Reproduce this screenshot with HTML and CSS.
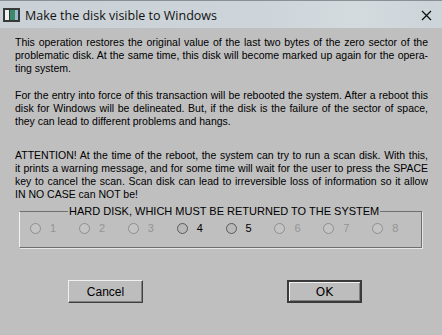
FILE: index.html
```html
<!DOCTYPE html>
<html>
<head>
<meta charset="utf-8">
<link rel="stylesheet" href="styles.css">
</head>
<body>
<div class="window">
  <div class="titlebar">
    <svg class="appicon" width="17" height="14" viewBox="0 0 17 14">
      <rect x="0.5" y="0.5" width="16" height="13" fill="#2f3a38" stroke="#3a3a3a"/>
      <rect x="2" y="2" width="4" height="10" fill="#f0f0f0"/>
      <rect x="7" y="2" width="5" height="10" fill="#3d8a6a"/>
      <rect x="12" y="2" width="3" height="10" fill="#9fb8d0"/>
    </svg>
    <span class="title">Make the disk visible to Windows</span>
    <svg class="close" width="11" height="11" viewBox="0 0 11 11">
      <path d="M1 1 L10 10 M10 1 L1 10" stroke="#111" stroke-width="1.3" fill="none"/>
    </svg>
  </div>
  <div class="content">
    <div class="para">
      <div class="line full">This operation restores the original value of the last two bytes of the  zero  sector  of  the</div>
      <div class="line full">problematic disk. At the same time, this disk will become marked up again for the opera-</div>
      <div class="line">ting system.</div>
    </div>
    <div class="para p2">
      <div class="line full">For the entry into force of this transaction will be rebooted the system. After  a reboot this</div>
      <div class="line full">disk for Windows will be delineated. But, if the disk is the failure of the  sector  of space,</div>
      <div class="line">they can lead to different problems and hangs.</div>
    </div>
    <div class="para p3">
      <div class="line full">ATTENTION!  At the time of the reboot, the system can try to run a scan disk. With this,</div>
      <div class="line full">it prints a warning message, and for some time will wait for the user to press the  SPACE</div>
      <div class="line full">key to cancel the scan. Scan disk can lead to irreversible loss of information so it  allow</div>
      <div class="line">IN NO CASE can NOT be!</div>
    </div>
    <fieldset class="group">
      <legend>HARD DISK, WHICH MUST BE RETURNED TO THE SYSTEM</legend>
      <div class="radios">
        <label class="radio off"><span class="dot"></span>1</label>
        <label class="radio off"><span class="dot"></span>2</label>
        <label class="radio off"><span class="dot"></span>3</label>
        <label class="radio on"><span class="dot"></span>4</label>
        <label class="radio on"><span class="dot"></span>5</label>
        <label class="radio off"><span class="dot"></span>6</label>
        <label class="radio off"><span class="dot"></span>7</label>
        <label class="radio off"><span class="dot"></span>8</label>
      </div>
    </fieldset>
    <div class="buttons">
      <button class="btn">Cancel</button>
      <button class="btn default">OK</button>
    </div>
  </div>
</div>
</body>
</html>
```
FILE: styles.css
```css
html, body {
  margin: 0;
  padding: 0;
}
body {
  width: 442px;
  height: 335px;
  overflow: hidden;
  background: #bfbfbf;
  font-family: "Liberation Sans", Arial, sans-serif;
}
.window {
  width: 442px;
  height: 335px;
  background: #bfbfbf;
}
.titlebar {
  height: 28px;
  box-sizing: border-box;
  border-top: 1px solid #8a9096;
  background: linear-gradient(90deg, #c9d1d6 0%, #cdd5da 60%, #d3dbdf 80%, #ccd4d9 100%);
  display: flex;
  align-items: center;
  padding-left: 3px;
  padding-right: 10px;
}
.appicon {
  display: block;
  margin-top: 1px;
}
.title {
  margin-left: 5px;
  font-family: "Open Sans", "Noto Sans", sans-serif;
  font-size: 12.5px;
  color: #111;
  flex: 1;
  margin-top: 1px;
}
.close {
  display: block;
  margin-top: 1px;
}
.content {
  width: 413px;
  padding: 8px 14px 0 15px;
  font-size: 10.5px;
  line-height: 13px;
  color: #000;
}
.line {
  white-space: pre;
  overflow: hidden;
}
.line.full {
  text-align: justify;
  text-align-last: justify;
  white-space: normal;
}
.p2 {
  margin-top: 14px;
}
.p3 {
  margin-top: 21px;
}
.group {
  width: 403px;
  min-width: 0;
  height: 43px;
  box-sizing: border-box;
  margin: 4px 0 0 4px;
  padding: 5px 0 0 0;
  border: 1px solid #6f6f6f;
  border-left-color: #f2f2f2;
  box-shadow: 1px 1px 0 #e6e6e6;
}
.group legend {
  margin-left: 48px;
  padding: 0 1px;
  font-size: 11px;
  line-height: 12px;
  color: #000;
}
.radios {
  display: flex;
  padding-left: 10px;
}
.radio {
  width: 49px;
  display: flex;
  align-items: center;
  font-size: 11px;
  color: #949494;
}
.dot {
  width: 9px;
  height: 9px;
  border: 1px solid #8e8e8e;
  border-radius: 50%;
  margin-right: 9px;
  background: #c4c4c4;
}
.radio.on {
  color: #000;
}
.radio.on .dot {
  border-color: #5a5a5a;
  background: #b8b8b8;
}
.buttons {
  display: flex;
  padding-left: 53px;
  margin-top: 32px;
  gap: 144px;
}
.btn {
  width: 75px;
  height: 23px;
  margin: 0;
  padding: 0;
  background: #bdbdbd;
  border: 1px solid;
  border-color: #f0f0f0 #404040 #404040 #f0f0f0;
  box-shadow: inset -1px -1px 0 #808080;
  font-family: "Liberation Sans", Arial, sans-serif;
  font-size: 12px;
  color: #000;
}
.btn.default {
  border: 2px solid #3a3a3a;
  box-shadow: inset 1px 1px 0 #f0f0f0, inset -1px -1px 0 #808080;
  font-family: "DejaVu Sans", sans-serif;
  font-size: 12px;
}
```
